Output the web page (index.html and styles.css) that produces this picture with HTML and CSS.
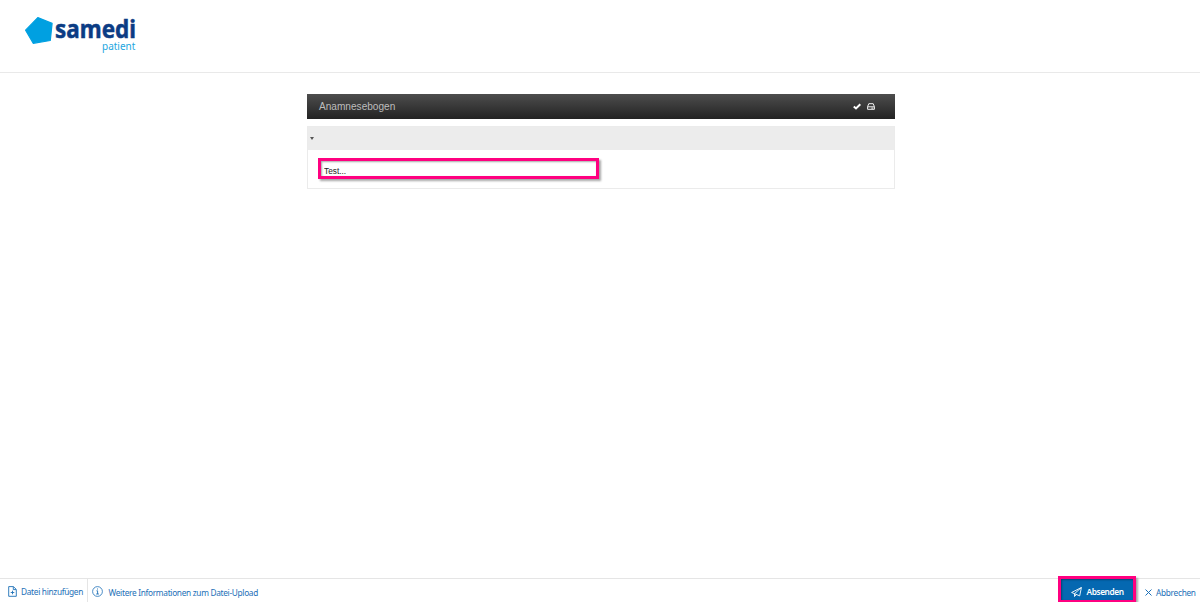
FILE: index.html
```
<!DOCTYPE html>
<html lang="de">
<head>
  <meta charset="UTF-8" />
  <meta name="viewport" content="width=device-width, initial-scale=1.0"/>
  <title>samedi patient - Anamnesebogen</title>
  <link rel="stylesheet" href="styles.css">
</head>
<body>
  <header class="header">
    <svg class="logo" width="114" height="42" viewBox="0 0 114 42" role="img" aria-label="samedi patient">
      <path class="logo-shape" d="M13.8 2.6 L28.1 8.4 L26.3 25.5 L9.2 28.3 L1.6 15.2 Z"/>
      <text class="logo-name" x="31" y="23.4" textLength="81" lengthAdjust="spacingAndGlyphs">samedi</text>
      <text class="logo-sub" x="78" y="35" textLength="33.3" lengthAdjust="spacingAndGlyphs">patient</text>
    </svg>
  </header>

  <main class="form">
    <div class="form-title">
      <h1>Anamnesebogen</h1>
      <div class="form-tools">
        <svg width="8" height="7" viewBox="0 0 8 7"><path d="M.8 3.4 L3 5.4 L7.3 1.2" fill="none" stroke="#fff" stroke-width="2"/></svg>
        <svg width="8" height="7" viewBox="0 0 8 7"><path d="M.6 3.6 L1.8 .7 H6.2 L7.4 3.6 V6.3 H.6 Z M.6 3.8 H7.4 M4.3 5.1 H6.3" fill="none" stroke="#f2f2f2" stroke-width="1"/></svg>
      </div>
    </div>
    <section class="panel">
      <div class="panel-head"><span class="caret"></span></div>
      <div class="panel-body">
        <input class="field highlight" type="text" value="Test..." />
      </div>
    </section>
  </main>

  <footer class="footer">
    <a class="link add-file">
      <svg width="9" height="11" viewBox="0 0 9 11"><path d="M.7 .6 H5.4 L8.3 3.4 V10.3 H.7 Z M5.3 .8 V3.6 H8 M4.5 4.7 V8.3 M2.7 6.5 H6.3" fill="none" stroke="currentColor" stroke-width=".9"/></svg>
      <span class="file-text">Datei hinzufügen</span>
    </a>
    <a class="link info">
      <svg width="11" height="11" viewBox="0 0 11 11"><circle cx="5.5" cy="5.5" r="4.9" fill="none" stroke="currentColor" stroke-width=".8"/><path d="M5.5 2.5 V3.5 M4.5 4.8 H5.6 V8 M4.2 8 H6.9" fill="none" stroke="currentColor" stroke-width=".9"/></svg>
      <span class="info-text">Weitere Informationen zum Datei-Upload</span>
    </a>
    <button class="submit highlight">
      <svg width="11" height="10" viewBox="0 0 11 10"><path d="M10.4 .5 L.6 5.5 L3.5 6.7 L8.7 8.9 Z M10.4 .5 L3.5 6.7 V9.5 L5.4 7.5" fill="none" stroke="#fff" stroke-width=".9" stroke-linejoin="round"/></svg>
      <span>Absenden</span>
    </button>
    <a class="link cancel">
      <svg width="7" height="7" viewBox="0 0 7 7"><path d="M.5 .5 L6.5 6.5 M6.5 .5 L.5 6.5" fill="none" stroke="currentColor" stroke-width="1"/></svg>
      <span>Abbrechen</span>
    </a>
  </footer>
</body>
</html>
```
FILE: styles.css
```
* {
  box-sizing: border-box;
}

body {
  margin: 0;
  height: 100vh;
  display: flex;
  flex-direction: column;
  overflow: hidden;
  background: #fff;
  font-family: "Noto Sans", "Open Sans", sans-serif;
}

.header {
  height: 73px;
  padding: 15px 24px;
  border-bottom: 1px solid #e9e9e9;
}

.logo {
  display: block;
  overflow: visible;
}

.logo-shape {
  fill: #00a0e1;
  stroke: #00a0e1;
  stroke-width: 1.2;
  stroke-linejoin: round;
}

.logo-name {
  fill: #0b3c84;
  stroke: #0b3c84;
  stroke-width: 0.5;
  font-size: 25px;
  font-weight: 700;
}

.logo-sub {
  fill: #1ba6e0;
  font-size: 10px;
}

.form {
  flex: 1;
  width: 588px;
  margin: 21px 0 0 307px;
  font-family: "Liberation Sans", Arial, sans-serif;
}

.form-title {
  display: flex;
  align-items: center;
  justify-content: space-between;
  height: 25px;
  padding: 0 20px 0 12px;
  background: linear-gradient(#4d4d4d, #232323);
}

.form-title h1 {
  margin: 0;
  color: #bdbdbd;
  font-size: 10.1px;
  font-weight: 400;
}

.form-tools {
  display: flex;
  gap: 6px;
}

.panel {
  height: 63px;
  margin-top: 7px;
  border: 1px solid #ebebeb;
}

.panel-head {
  display: flex;
  align-items: center;
  height: 23px;
  padding-left: 2px;
  background: #ececec;
}

.caret {
  border: 2.5px solid transparent;
  border-top: 3px solid #555;
  border-bottom: 0;
}

.panel-body {
  padding: 8px 10px;
}

.highlight {
  border: 3px solid #ff0080;
  box-shadow: 2px 2px 2px rgba(0, 0, 0, 0.35), inset 1px 1px 2px rgba(0, 0, 0, 0.35);
}

.field {
  display: block;
  width: 281px;
  height: 21px;
  padding: 4px 3px 0;
  outline: none;
  color: #222;
  font: 8.3px "Liberation Sans", Arial, sans-serif;
}

.footer {
  display: flex;
  height: 24px;
  border-top: 1px solid #e5e5e5;
}

.link {
  display: flex;
  align-items: center;
  color: #1d70b7;
  font-size: 8.3px;
  letter-spacing: -0.31px;
  white-space: nowrap;
}

.add-file {
  width: 88px;
  padding: 2px 0 0 8px;
  gap: 4px;
  border-right: 1px solid #e5e5e5;
}

.info {
  padding: 2px 0 0 4px;
  gap: 5.5px;
}

.info-text {
  padding-top: 1px;
}

.submit {
  display: flex;
  align-items: center;
  gap: 4.5px;
  width: 78px;
  height: 27px;
  margin: -3px 9px 0 auto;
  padding: 4px 0 0 10px;
  background: #0568b1;
  color: #fff;
  font: 600 8.3px "Noto Sans", sans-serif;
  letter-spacing: -0.4px;
}

.cancel {
  width: 55px;
  padding-top: 3px;
  gap: 4px;
  letter-spacing: -0.3px;
}
```
